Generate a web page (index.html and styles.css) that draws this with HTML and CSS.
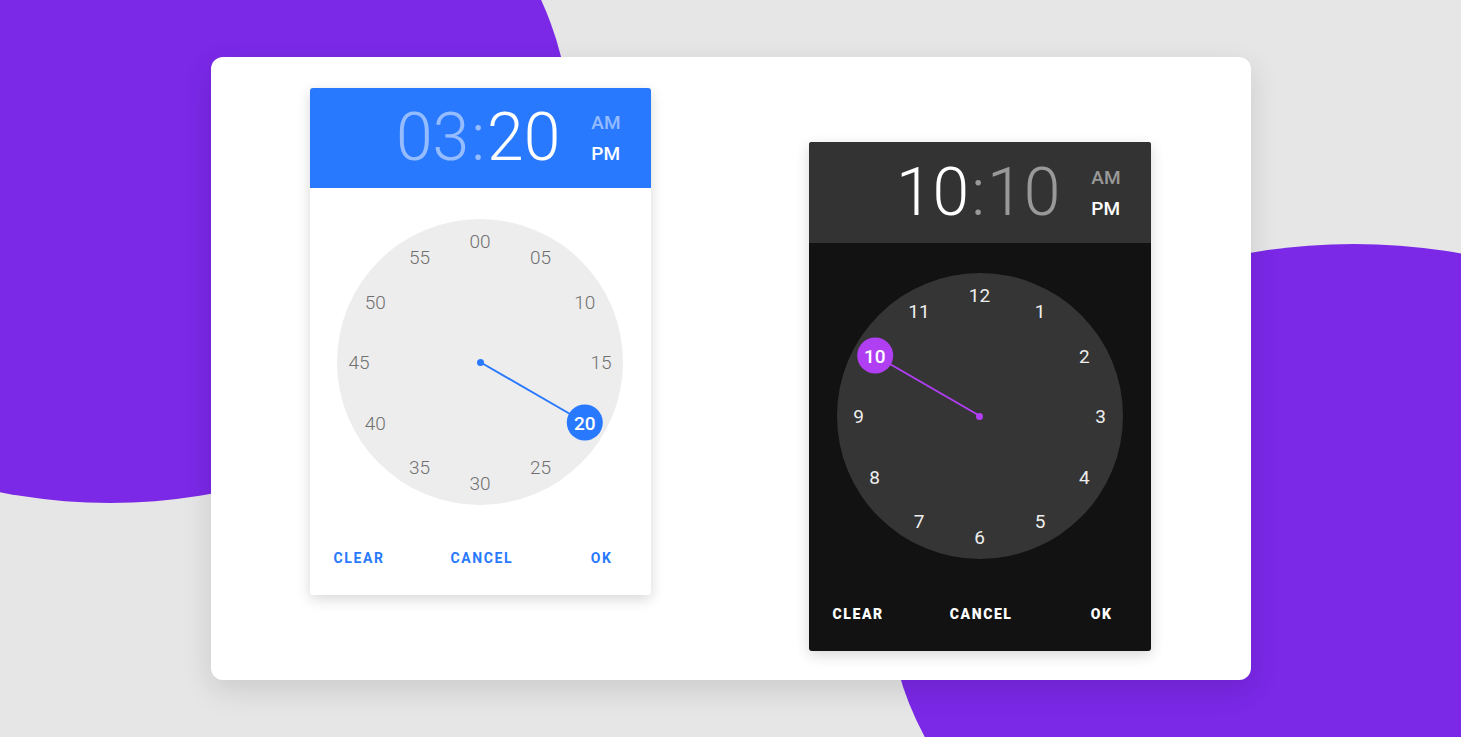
FILE: index.html
```html
<!DOCTYPE html>
<html lang="en">
<head>
  <meta charset="UTF-8">
  <title>Time Pickers</title>
  <link rel="stylesheet" href="styles.css">
</head>
<body>
  <div class="backdrop">
    <div class="blob blob-left"></div>
    <div class="blob blob-right"></div>
  </div>

  <div class="card">
    <div class="picker picker-light">
      <div class="picker-head">
        <div class="time">
          <span class="dim">03</span><span class="dim colon">:</span><span>20</span>
        </div>
        <div class="ampm">
          <span class="dim">AM</span>
          <span>PM</span>
        </div>
      </div>
      <div class="picker-body">
        <div class="face">
          <div class="hand" style="--i: 4"></div>
          <div class="pivot"></div>
          <span class="num" style="--i: 0">00</span>
          <span class="num" style="--i: 1">05</span>
          <span class="num" style="--i: 2">10</span>
          <span class="num" style="--i: 3">15</span>
          <span class="num selected" style="--i: 4">20</span>
          <span class="num" style="--i: 5">25</span>
          <span class="num" style="--i: 6">30</span>
          <span class="num" style="--i: 7">35</span>
          <span class="num" style="--i: 8">40</span>
          <span class="num" style="--i: 9">45</span>
          <span class="num" style="--i: 10">50</span>
          <span class="num" style="--i: 11">55</span>
        </div>
      </div>
      <div class="actions">
        <button type="button">Clear</button>
        <button type="button" class="cancel">Cancel</button>
        <button type="button" class="ok">OK</button>
      </div>
    </div>

    <div class="picker picker-dark">
      <div class="picker-head">
        <div class="time">
          <span>10</span><span class="dim colon">:</span><span class="dim">10</span>
        </div>
        <div class="ampm">
          <span class="dim">AM</span>
          <span>PM</span>
        </div>
      </div>
      <div class="picker-body">
        <div class="face">
          <div class="hand" style="--i: 10"></div>
          <div class="pivot"></div>
          <span class="num" style="--i: 0">12</span>
          <span class="num" style="--i: 1">1</span>
          <span class="num" style="--i: 2">2</span>
          <span class="num" style="--i: 3">3</span>
          <span class="num" style="--i: 4">4</span>
          <span class="num" style="--i: 5">5</span>
          <span class="num" style="--i: 6">6</span>
          <span class="num" style="--i: 7">7</span>
          <span class="num" style="--i: 8">8</span>
          <span class="num" style="--i: 9">9</span>
          <span class="num selected" style="--i: 10">10</span>
          <span class="num" style="--i: 11">11</span>
        </div>
      </div>
      <div class="actions">
        <button type="button">Clear</button>
        <button type="button" class="cancel">Cancel</button>
        <button type="button" class="ok">OK</button>
      </div>
    </div>
  </div>
</body>
</html>
```

FILE: styles.css
```css
html, body {
    height: 100%;
}

body {
    background: #e6e6e6;
    font-family: Roboto, "Liberation Sans", Arial, sans-serif;
    margin: 0;
    padding: 0;
    display: flex;
    align-items: center;
    justify-content: center;
    position: relative;
    overflow: hidden;
}

/* background shapes */
.backdrop {
    position: absolute;
    top: 0;
    left: 0;
    right: 0;
    bottom: 0;
    overflow: hidden;
}

.blob {
    position: absolute;
    background: #7b28e7;
    border-radius: 50%;
}

.blob-left {
    left: -350px;
    top: -243px;
    width: 920px;
    height: 746px;
}

.blob-right {
    left: 889px;
    top: 244px;
    width: 930px;
    height: 712px;
}

.card {
    position: relative;
    width: 1040px;
    height: 623px;
    box-sizing: border-box;
    background: #fff;
    border-radius: 12px;
    box-shadow: 0 10px 30px rgba(0, 0, 0, 0.12);
    display: flex;
    justify-content: space-between;
    align-items: flex-start;
    padding: 31px 100px 0 99px;
}

/* picker */
.picker {
    width: 341px;
    border-radius: 3px;
    overflow: hidden;
    box-shadow: 0 4px 14px rgba(0, 0, 0, 0.16);
}

.picker-head {
    height: 100px;
    display: flex;
    justify-content: flex-end;
    align-items: center;
    padding-right: 30px;
    color: #fff;
}

.time {
    font-size: 66px;
    font-weight: 300;
    line-height: 1;
}

.colon {
    margin: 0 2px;
}

.ampm {
    display: flex;
    flex-direction: column;
    margin-left: 31px;
    font-size: 19px;
    font-weight: 500;
    line-height: 31px;
}

.picker-body {
    display: flex;
    justify-content: center;
    padding-top: 31px;
}

.face {
    position: relative;
    width: 286px;
    height: 286px;
    border-radius: 50%;
}

.num {
    position: absolute;
    left: 50%;
    top: 50%;
    width: 36px;
    height: 36px;
    margin: -18px 0 0 -18px;
    border-radius: 50%;
    display: flex;
    align-items: center;
    justify-content: center;
    font-size: 19px;
    transform: rotate(calc(var(--i) * 30deg)) translateY(-121px) rotate(calc(var(--i) * -30deg));
}

.hand {
    position: absolute;
    left: 50%;
    bottom: 50%;
    width: 2px;
    height: 104px;
    margin-left: -1px;
    transform-origin: 50% 100%;
    transform: rotate(calc(var(--i) * 30deg));
}

.pivot {
    position: absolute;
    left: 50%;
    top: 50%;
    width: 7px;
    height: 7px;
    margin: -3.5px 0 0 -3.5px;
    border-radius: 50%;
}

.actions {
    display: flex;
    align-items: center;
    height: 90px;
    padding: 0 38px 0 24px;
}

.actions button {
    background: none;
    border: 0;
    padding: 0;
    margin: 16px 0 0 0;
    font-family: inherit;
    font-size: 14px;
    font-weight: 700;
    letter-spacing: 1.6px;
    text-transform: uppercase;
    line-height: 1;
}

.actions .cancel {
    margin-left: 66px;
}

.actions .ok {
    margin-left: auto;
}

/* light theme */
.picker-light {
    background: #fff;
}

.picker-light .picker-head {
    background: #2979ff;
}

.picker-light .dim {
    color: rgba(255, 255, 255, 0.5);
}

.picker-light .face {
    background: #ededed;
}

.picker-light .num {
    color: #707070;
    font-weight: 300;
}

.picker-light .num.selected,
.picker-light .hand,
.picker-light .pivot {
    background: #2979ff;
}

.picker-light .num.selected {
    color: #fff;
    font-weight: 500;
}

.picker-light .actions button {
    color: #2979ff;
}

/* dark theme */
.picker-dark {
    width: 342px;
    background: #121212;
    margin-top: 54px;
}

.picker-dark .picker-head {
    height: 101px;
    background: #333;
}

.picker-dark .picker-body {
    padding-top: 30px;
}

.picker-dark .dim {
    color: rgba(255, 255, 255, 0.5);
}

.picker-dark .face {
    background: #353535;
}

.picker-dark .num {
    color: #eee;
}

.picker-dark .num.selected,
.picker-dark .hand,
.picker-dark .pivot {
    background: #b03ef2;
}

.picker-dark .num.selected {
    color: #fff;
    font-weight: 500;
}

.picker-dark .actions {
    height: 92px;
}

.picker-dark .actions button {
    color: #fff;
    font-weight: 900;
    margin-top: 18px;
}
```
